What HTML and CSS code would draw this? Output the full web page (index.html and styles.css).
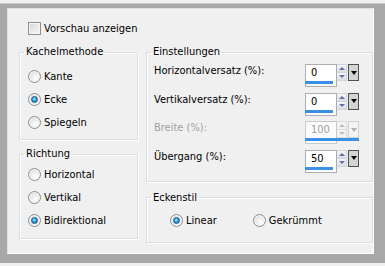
FILE: index.html
```html
<!DOCTYPE html>
<html>
<head>
<meta charset="utf-8">
<link rel="stylesheet" href="styles.css">
</head>
<body>
<div class="frame">
  <div class="panel">
    <div class="check"><span class="cb"></span><span>Vorschau anzeigen</span></div>
    <div class="main">
      <div class="col left">
        <fieldset class="grp kachel">
          <legend>Kachelmethode</legend>
          <div class="radios">
            <div class="radio"><span class="rb"></span><span>Kante</span></div>
            <div class="radio"><span class="rb on"></span><span>Ecke</span></div>
            <div class="radio"><span class="rb"></span><span>Spiegeln</span></div>
          </div>
        </fieldset>
        <fieldset class="grp richtung">
          <legend>Richtung</legend>
          <div class="radios">
            <div class="radio"><span class="rb"></span><span>Horizontal</span></div>
            <div class="radio"><span class="rb"></span><span>Vertikal</span></div>
            <div class="radio"><span class="rb on"></span><span>Bidirektional</span></div>
          </div>
        </fieldset>
      </div>
      <div class="col right">
        <fieldset class="grp einst">
          <legend>Einstellungen</legend>
          <div class="rows">
            <div class="row">
              <span class="lbl">Horizontalversatz (%):</span>
              <div class="spin">
                <div class="field"><span class="val">0</span></div>
                <div class="arrows"><span class="ab"><i class="up"></i></span><span class="ab"><i class="dn"></i></span></div>
                <div class="drop"><i></i></div>
                <div class="bar" style="width:28px"></div>
              </div>
            </div>
            <div class="row">
              <span class="lbl">Vertikalversatz (%):</span>
              <div class="spin">
                <div class="field"><span class="val">0</span></div>
                <div class="arrows"><span class="ab"><i class="up"></i></span><span class="ab"><i class="dn"></i></span></div>
                <div class="drop"><i></i></div>
                <div class="bar" style="width:28px"></div>
              </div>
            </div>
            <div class="row disabled">
              <span class="lbl">Breite (%):</span>
              <div class="spin">
                <div class="field"><span class="val">100</span></div>
                <div class="arrows"><span class="ab"><i class="up"></i></span><span class="ab"><i class="dn"></i></span></div>
                <div class="drop"><i></i></div>
                <div class="bar" style="width:54px"></div>
              </div>
            </div>
            <div class="row">
              <span class="lbl">Übergang (%):</span>
              <div class="spin">
                <div class="field"><span class="val">50</span></div>
                <div class="arrows"><span class="ab"><i class="up"></i></span><span class="ab"><i class="dn"></i></span></div>
                <div class="drop"><i></i></div>
                <div class="bar" style="width:28px"></div>
              </div>
            </div>
          </div>
        </fieldset>
        <fieldset class="grp ecken">
          <legend>Eckenstil</legend>
          <div class="hradios">
            <div class="radio"><span class="rb on"></span><span>Linear</span></div>
            <div class="radio"><span class="rb"></span><span>Gekrümmt</span></div>
          </div>
        </fieldset>
      </div>
    </div>
  </div>
</div>
</body>
</html>
```
FILE: styles.css
```css
html, body {
  margin: 0;
  padding: 0;
}
body {
  width: 385px;
  height: 266px;
  background: #f0f0f0;
  font-family: "DejaVu Sans Condensed", "DejaVu Sans", sans-serif;
  font-stretch: condensed;
  font-size: 11px;
  color: #000;
  overflow: hidden;
}
.frame {
  margin-top: 3px;
  height: 260px;
  box-sizing: border-box;
  background: #a8a8a8;
  border-top: 1px solid #c8c8c8;
  padding: 4px 11px 9px 7px;
}
.panel {
  height: 100%;
  box-sizing: border-box;
  background: #f0f0f0;
  border: 1px solid #fff;
  border-left-color: #e0e0e0;
  border-top-color: #e0e0e0;
  padding: 12px 0 0 11px;
}
.check {
  display: flex;
  align-items: center;
  height: 14px;
  margin-left: 9px;
  gap: 3px;
}
.cb {
  width: 11px;
  height: 11px;
  border: 1px solid #8f8f8f;
  background: linear-gradient(135deg, #d8d8d8, #f8f8f8);
  box-shadow: inset 0 0 0 1px #f4f4f4;
}
.main {
  display: flex;
  gap: 8px;
  margin-top: 10px;
}
.col {
  display: flex;
  flex-direction: column;
}
.left { width: 119px; gap: 7px; }
.right { width: 227px; gap: 9px; }
.grp {
  margin: 0;
  padding: 0;
  border: 1px solid #d5dfe5;
  box-shadow: inset 1px 1px 0 #fff, 1px 1px 0 #fff;
  min-width: 0;
}
.grp legend {
  margin-left: 4px;
  padding: 0 2px;
  line-height: 14px;
  height: 14px;
}
.radios {
  display: flex;
  flex-direction: column;
}
.kachel .radios { padding: 6px 0 4px 8px; height: 70px; }
.richtung .radios { padding: 2px 0 5px 8px; height: 70px; }
.radio {
  display: flex;
  align-items: center;
  height: 23px;
  gap: 3px;
}
.rb {
  width: 11px;
  height: 11px;
  border-radius: 50%;
  border: 1px solid #8e8f8f;
  background: radial-gradient(circle at 60% 65%, #ffffff 0%, #f2f2f2 30%, #d4d4d4 100%);
  box-shadow: inset 0 0 0 1px #f6f6f6;
  display: flex;
  align-items: center;
  justify-content: center;
}
.rb.on::after {
  content: "";
  width: 5px;
  height: 5px;
  border-radius: 50%;
  background: radial-gradient(circle at 45% 40%, #a9e8ff 0%, #2fa2e0 45%, #0b4f8c 100%);
  border: 1px solid #1c5a8c;
}
.rows {
  display: flex;
  flex-direction: column;
  gap: 5.5px;
  padding: 5px 13px 8px 7px;
}
.row {
  display: flex;
  align-items: flex-start;
  justify-content: space-between;
  height: 23px;
}
.lbl { line-height: 13px; }
.disabled .lbl { color: #a0a0a0; }
.spin {
  position: relative;
  display: flex;
  align-items: flex-start;
  height: 23px;
}
.field {
  width: 30px;
  height: 21px;
  border: 1px solid #abadb3;
  background: #fff;
}
.val {
  display: block;
  padding: 1px 0 0 5px;
  line-height: 13px;
  color: #000;
}
.arrows {
  display: flex;
  flex-direction: column;
  width: 10px;
  height: 17px;
}
.ab {
  flex: 1;
  display: flex;
  align-items: center;
  justify-content: center;
  background: linear-gradient(#f6f6f6, #dedede);
  border: 1px solid #d0d6e0;
  border-left: none;
}
.ab + .ab { border-top: none; }
.ab i {
  width: 0;
  height: 0;
  border-left: 3px solid transparent;
  border-right: 3px solid transparent;
}
.ab i.up { border-bottom: 3px solid #5c70b0; }
.ab i.dn { border-top: 3px solid #5c70b0; }
.drop {
  width: 9px;
  height: 15px;
  border: 1px solid #505050;
  background: #d4d4d4;
  margin-left: 1px;
  display: flex;
  align-items: center;
  justify-content: center;
}
.drop i {
  width: 0;
  height: 0;
  border-left: 3px solid transparent;
  border-right: 3px solid transparent;
  border-top: 4px solid #000;
}
.bar {
  position: absolute;
  left: 0;
  bottom: 3px;
  height: 3px;
  background: #3c8fe6;
}
.disabled .field { border-color: #c8c8c8; background: #fbfbfb; }
.disabled .val { color: #a0a0a0; }
.disabled .ab i.up { border-bottom-color: #c0c0c0; }
.disabled .ab i.dn { border-top-color: #c0c0c0; }
.disabled .ab { border-color: #dcdcdc; background: #f4f4f4; }
.disabled .drop { border-color: #d0d0d0; background: #f4f4f4; }
.disabled .drop i { border-top-color: #b0b0b0; }
.hradios {
  display: flex;
  padding: 4px 0 10px 23px;
  gap: 36px;
}
```
